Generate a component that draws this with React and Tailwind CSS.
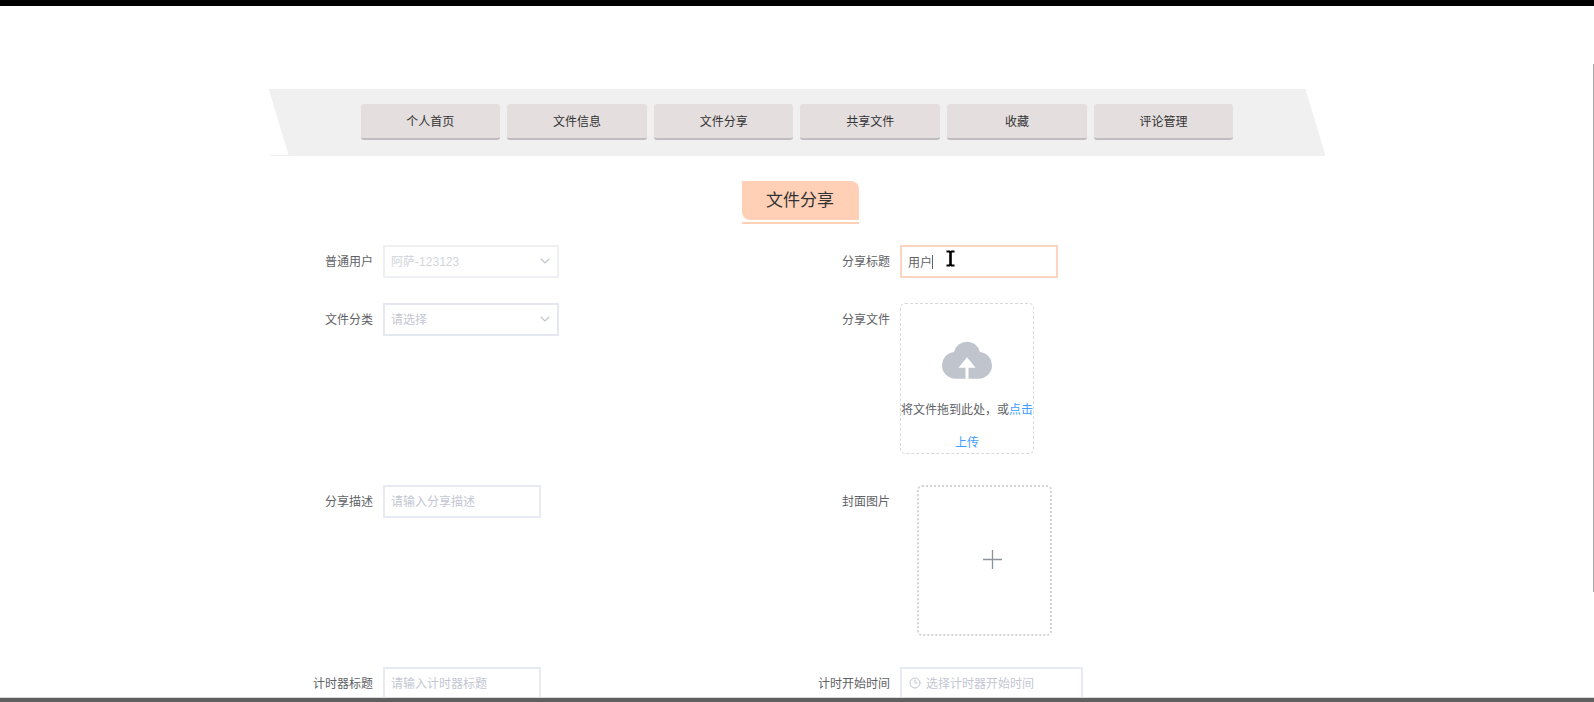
import { useState } from "react";
import { ChevronDown, Clock3 } from "lucide-react";

const navItems = ["个人首页", "文件信息", "文件分享", "共享文件", "收藏", "评论管理"];

const inputClass =
    "block h-[33px] w-[158px] border-2 border-[#e7eaf2] bg-white px-1.5 text-xs text-[#606266] outline-none placeholder:text-[#c3c6d2]";

const FormItem = ({ id, label, children }) => (
    <div className="flex items-start">
        <label
            htmlFor={id}
            className="w-[100px] shrink-0 pr-2.5 text-right text-xs leading-[35px] text-[#606266]"
        >
            {label}
        </label>
        {children}
    </div>
);

const SelectBox = ({ id, disabled, text }) => (
    <div className="relative w-[176px]">
        <select
            id={id}
            disabled={disabled}
            className="block h-[33px] w-full appearance-none border-2 border-[#e6e8f1] bg-white px-1.5 text-xs text-[#c3c6d2] opacity-100 outline-none disabled:border-[#eff0f5] disabled:text-[#d3d5dc]"
        >
            <option>{text}</option>
        </select>
        <ChevronDown
            className="pointer-events-none absolute right-1.5 top-2 h-4 w-4 text-[#c0c4cc]"
            strokeWidth={1.6}
        />
    </div>
);

const UploadCloud = () => (
    <svg viewBox="0 0 149 112" className="mx-auto h-[38px] w-[50px] shrink-0" fill="#c0c4cc">
        <path d="M40 112A40 40 0 0 1 36 32.2A39.5 39.5 0 0 1 113 32.2A40 40 0 0 1 109 112H79V79H100L74.5 48L49 79H70V112Z" />
    </svg>
);

const App = () => {
    const [title, setTitle] = useState("用户");

    return (
        <div className="relative flex h-screen flex-col overflow-hidden bg-white font-['Liberation_Sans','Noto_Sans_CJK_SC',sans-serif]">
            <div className="h-1.5 shrink-0 bg-black" />

            <main className="min-h-0 flex-1 overflow-hidden pt-[83px]">
                {/* Navigation */}
                <nav className="mx-auto w-[66.3%] border-b border-[#f0f0f0]">
                    <div className="bg-[#f0f0f0] py-[15px] [clip-path:polygon(0_0,calc(100%_-_20px)_0,100%_100%,20px_100%)]">
                        <div className="mx-auto grid w-[82.6%] grid-cols-6 gap-[7px]">
                            {navItems.map((item) => (
                                <button
                                    key={item}
                                    type="button"
                                    className="h-9 rounded-[3px] border-b-2 border-[#c1bcbf] bg-[#e4dede] pt-0.5 text-xs text-[#333]"
                                >
                                    {item}
                                </button>
                            ))}
                        </div>
                    </div>
                </nav>

                {/* Page title */}
                <div className="ml-1.5 mt-[25px] flex justify-center">
                    <div className="w-[117px] border-b-2 border-[#ffd0b6] pb-0.5">
                        <h1 className="rounded-bl-lg rounded-tr-lg bg-[#ffd0b6] text-center text-[17px] leading-[39px] text-[#333]">
                            文件分享
                        </h1>
                    </div>
                </div>

                {/* Share form */}
                <form className="ml-1.5 mt-[21px]">
                    <div className="mx-auto grid w-[65.1%] grid-cols-2 gap-y-[23px]">
                        <FormItem id="user" label="普通用户">
                            <SelectBox id="user" disabled text="阿萨-123123" />
                        </FormItem>
                        <FormItem id="title" label="分享标题">
                            <div className="relative">
                                <input
                                    id="title"
                                    type="text"
                                    value={title}
                                    onChange={(e) => setTitle(e.target.value)}
                                    className="block h-[33px] w-[158px] border-2 border-[#fbd5bf] bg-white px-1.5 text-xs text-[#606266] outline-none"
                                />
                                <span className="absolute left-8 top-2.5 h-3.5 w-px bg-[#606266]" />
                                <svg
                                    viewBox="0 0 9 17"
                                    className="pointer-events-none absolute left-[46px] top-[5px] h-[17px] w-[9px]"
                                    fill="none"
                                    stroke="#000"
                                >
                                    <path d="M0.5 1.5H3.5L4.5 2.5L5.5 1.5H8.5M0.5 15.5H3.5L4.5 14.5L5.5 15.5H8.5" strokeWidth="2" />
                                    <path d="M4.5 2V15" strokeWidth="2.6" />
                                </svg>
                            </div>
                        </FormItem>

                        <FormItem id="category" label="文件分类">
                            <SelectBox id="category" text="请选择" />
                        </FormItem>
                        <FormItem id="file" label="分享文件">
                            <div className="pb-2">
                                <button
                                    id="file"
                                    type="button"
                                    className="flex h-[151px] w-[134px] flex-col items-center rounded-[5px] border border-dashed border-[#d9d9d9] pt-[37px] text-xs leading-[33px] text-[#606266]"
                                >
                                    <UploadCloud />
                                    <span className="mt-[15px] whitespace-nowrap">
                                        将文件拖到此处，或<em className="not-italic text-[#409eff]">点击</em>
                                    </span>
                                    <em className="not-italic text-[#409eff]">上传</em>
                                </button>
                            </div>
                        </FormItem>

                        <FormItem id="desc" label="分享描述">
                            <input id="desc" type="text" placeholder="请输入分享描述" className={inputClass} />
                        </FormItem>
                        <FormItem id="cover" label="封面图片">
                            <div className="pb-2 pl-[17px]">
                                <button
                                    id="cover"
                                    type="button"
                                    aria-label="封面图片"
                                    className="flex h-[151px] w-[135px] items-center justify-center rounded-[5px] border-2 border-dotted border-[#d4d4d4] pb-0.5 pl-[15px]"
                                >
                                    <svg viewBox="0 0 19 19" className="h-[19px] w-[19px]" stroke="#8c939d" strokeWidth="1.3">
                                        <path d="M9.5 0V19M0 9.5H19" />
                                    </svg>
                                </button>
                            </div>
                        </FormItem>

                        <FormItem id="timerTitle" label="计时器标题">
                            <input id="timerTitle" type="text" placeholder="请输入计时器标题" className={inputClass} />
                        </FormItem>
                        <FormItem id="startTime" label="计时开始时间">
                            <div className="relative">
                                <input
                                    id="startTime"
                                    type="text"
                                    placeholder="选择计时器开始时间"
                                    className="block h-[33px] w-[183px] border-2 border-[#e7eaf2] bg-white pl-6 text-xs text-[#606266] outline-none placeholder:text-[#c3c6d2]"
                                />
                                <Clock3 className="absolute left-[9px] top-2.5 h-3 w-3 text-[#c0c4cc]" strokeWidth={2} />
                            </div>
                        </FormItem>
                    </div>
                </form>
            </main>

            <div className="h-[5px] shrink-0 border-t border-[#d9d9d9] bg-[#5f5f5f]" />

            {/* Scrollbar thumb */}
            <div className="absolute right-0 top-16 h-[75.2%] w-px bg-[#a8a8a8]" />
        </div>
    );
};

export default App;
